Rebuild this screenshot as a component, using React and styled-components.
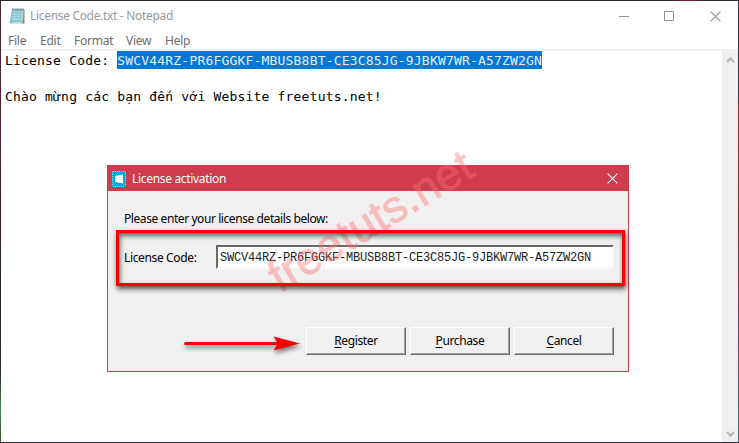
import React from "react";
import styled, { createGlobalStyle } from "styled-components";

const GlobalStyle = createGlobalStyle`
  * { box-sizing: border-box; }
  body { margin: 0; }
`;

const UI_FONT = `"Noto Sans", "Open Sans", sans-serif`;

const Desktop = styled.div`
  position: relative;
  width: 739px;
  height: 443px;
  padding: 1px;
  overflow: hidden;
  background:
    linear-gradient(#2c2a2f, #2c2a2f) 0 100% / 100% 1px no-repeat,
    linear-gradient(90deg, #2c2528 0 91%, #8a2340 93%, #2c2a2f 95%) 0 0 / 739px 1px no-repeat,
    linear-gradient(#3c2530 0, #51222f 30%, #2c1d24 60%, #27342a 85%, #4c8a4c 92%, #35512f) 0 0 / 1px 100% no-repeat,
    linear-gradient(#2f2f34 0, #35353a 22%, #8c2c40 24%, #6a2a38 50%, #52566a 90%, #5c6478) 100% 0 / 1px 100% no-repeat;
  font-family: ${UI_FONT};
`;

const NotepadWindow = styled.div`
  display: flex;
  flex-direction: column;
  height: 441px;
  background: #fff;
`;

const TitleBar = styled.header`
  display: flex;
  align-items: center;
  height: 30px;
  padding-left: 8px;
  color: #999;
  font-size: 12px;
`;

const Title = styled.span`
  flex: 1;
  margin-left: 4px;
  letter-spacing: -0.32px;
  line-height: 18px;
  white-space: nowrap;
`;

const WindowControls = styled.div`
  display: flex;
  height: 28px;
`;

const Control = styled.div`
  display: grid;
  place-items: center;
  width: ${(p) => p.$width || 46}px;
`;

const MenuBar = styled.nav`
  display: flex;
  gap: 14px;
  height: 18px;
  padding-left: 7px;
  color: #6d6d6d;
  font-size: 12px;
  line-height: 20px;
`;

const MenuItem = styled.span`
  width: ${(p) => p.$width}px;
  letter-spacing: -0.25px;
  white-space: nowrap;
`;

const Body = styled.div`
  display: flex;
  flex: 1;
  border-top: 2px solid #f0f0f0;
`;

const Editor = styled.div`
  flex: 1;
  padding-left: 4px;
  color: #000;
  font-family: "DejaVu Sans Mono", monospace;
  font-size: 13px;
  letter-spacing: 0.19px;
  line-height: 20px;
  white-space: pre;
`;

const Line = styled.div`
  height: 18px;
`;

const Selection = styled.span`
  display: inline-block;
  height: 18px;
  color: #e4f1ff;
  background: #0078d7;
`;

const Scrollbar = styled.div`
  display: flex;
  flex-direction: column;
  justify-content: space-between;
  align-items: center;
  width: 16px;
  padding: 5px 0 4px;
  background: #f0f0f0;
`;

const Dialog = styled.section`
  position: absolute;
  left: 107px;
  top: 165px;
  width: 522px;
  height: 207px;
  border: 1px solid #cd3d4c;
  background: #f0f0f0;
  color: #000;
  font-size: 12px;
`;

const DialogBar = styled.header`
  display: flex;
  align-items: center;
  height: 25px;
  padding: 0 10px 0 4px;
  color: #fff;
  background: #cd3d4c;
`;

const DialogTitle = styled.span`
  flex: 1;
  margin-left: 6px;
  font-size: 12px;
  letter-spacing: -0.32px;
  line-height: 18px;
`;

const DialogBody = styled.div`
  display: flex;
  flex-direction: column;
  padding: 19px 14px 0 16px;
`;

const Prompt = styled.p`
  margin: 0;
  letter-spacing: -0.42px;
  line-height: 18px;
`;

const Field = styled.div`
  display: flex;
  align-items: center;
  margin-top: 17px;
`;

const Label = styled.label`
  width: 92px;
  letter-spacing: -0.36px;
`;

const LicenseInput = styled.div`
  flex: 1;
  height: 24px;
  padding-left: 2px;
  border: 2px solid;
  border-color: #696969 #fafafa #fafafa #696969;
  background: #fff;
  color: #1c1c1c;
  font-family: "Liberation Mono", monospace;
  font-size: 12px;
  letter-spacing: -0.2px;
  line-height: 22px;
  white-space: nowrap;
`;

const Actions = styled.div`
  display: flex;
  justify-content: flex-end;
  gap: 4px;
  margin-top: 58px;
`;

const Button = styled.button`
  width: 100px;
  height: 28px;
  padding: 0;
  border: 1px solid;
  border-color: #fff #696969 #696969 #fff;
  box-shadow: inset -1px -1px #a0a0a0;
  background: #f0f0f0;
  color: #000;
  font: 12px/20px ${UI_FONT};
  letter-spacing: -0.38px;
`;

const AccessKey = styled.span`
  text-decoration: underline;
  text-underline-offset: 2px;
`;

const Highlight = styled.div`
  position: absolute;
  left: 116px;
  top: 230px;
  width: 509px;
  height: 56px;
  border: 3px solid #fe0000;
  box-shadow: 1px 3px 5px rgba(0, 0, 0, 0.65), inset 1px 3px 5px rgba(0, 0, 0, 0.6);
`;

const Arrow = styled.svg`
  position: absolute;
  left: 180px;
  top: 330px;
  filter: drop-shadow(1px 3px 2px rgba(0, 0, 0, 0.5));
`;

const Watermark = styled.div`
  position: absolute;
  left: 280px;
  top: 253px;
  color: #ff7070;
  opacity: 0.4;
  font-family: "Liberation Sans", sans-serif;
  font-size: 45px;
  line-height: 50px;
  letter-spacing: 0.4px;
  white-space: nowrap;
  -webkit-text-stroke: 1px #ff7070;
  transform: rotate(-31deg);
  transform-origin: 0 40px;
  pointer-events: none;
`;

const NotepadIcon = () => (
  <svg width="17" height="18" viewBox="0 0 17 18">
    <path d="M3 3h12.5v13.5H13z" fill="#9a8460" />
    <path d="M3.5 2.5H15L13.5 16H1z" fill="#8ec5d4" stroke="#6aa5b5" strokeWidth=".7" />
    <path d="M4 5h9M3.6 7.5h9M3.2 10h9M2.8 12.5h9" stroke="#b9e2eb" strokeWidth=".8" />
    <path d="M4 1v3M6 1v3M8 1v3M10 1v3M12 1v3M14 1v3" stroke="#71888e" strokeWidth=".8" />
    <path d="M14 4.5l-1.2 11H4" fill="none" stroke="#d9edf0" strokeWidth=".7" />
  </svg>
);

const AppIcon = () => (
  <svg width="14" height="16" viewBox="0 0 14 16">
    <path d="M0 0h14v16H0z" fill="#00a9dc" />
    <path d="M1 .5h12M1 15.5h12M.5 1v14M13.5 1v14" stroke="#8fdcf0" strokeDasharray="1 1" />
    <path d="M3 5l8-1.5v9L3 11z" fill="#fff" />
  </svg>
);

const Cross = ({ color, size = 11 }) => (
  <svg width={size} height={size} viewBox="0 0 11 11">
    <path d="M.6.6l9.8 9.8M10.4.6L.6 10.4" stroke={color} strokeWidth="1.1" />
  </svg>
);

const Chevron = ({ down }) => (
  <svg width="9" height="8" viewBox="0 0 9 8">
    <path d={down ? "M1 2l3.5 3.5L8 2" : "M1 6l3.5-3.5L8 6"} fill="none" stroke="#b9b9b9" strokeWidth="2.3" />
  </svg>
);

const CODE = "SWCV44RZ-PR6FGGKF-MBUSB8BT-CE3C85JG-9JBKW7WR-A57ZW2GN";
const MENUS = [
  ["File", 18],
  ["Edit", 20],
  ["Format", 38],
  ["View", 25],
  ["Help", 26],
];

export default function App() {
  return (
    <Desktop>
      <GlobalStyle />
      <NotepadWindow>
        <TitleBar>
          <NotepadIcon />
          <Title>License Code.txt - Notepad</Title>
          <WindowControls>
            <Control $width={44}>
              <svg width="10" height="1"><path d="M0 .5h10" stroke="#929292" /></svg>
            </Control>
            <Control>
              <svg width="10" height="10"><path d="M.5.5h9v9h-9z" fill="none" stroke="#929292" /></svg>
            </Control>
            <Control><Cross color="#929292" /></Control>
          </WindowControls>
        </TitleBar>
        <MenuBar>
          {MENUS.map(([name, width]) => (
            <MenuItem key={name} $width={width}>{name}</MenuItem>
          ))}
        </MenuBar>
        <Body>
          <Editor>
            <Line>License Code: <Selection>{CODE}</Selection></Line>
            <Line />
            <Line>Chào mừng các bạn đến với Website freetuts.net!</Line>
          </Editor>
          <Scrollbar>
            <Chevron />
            <Chevron down />
          </Scrollbar>
        </Body>
      </NotepadWindow>

      <Dialog>
        <DialogBar>
          <AppIcon />
          <DialogTitle>License activation</DialogTitle>
          <Cross color="#fff" />
        </DialogBar>
        <DialogBody>
          <Prompt>Please enter your license details below:</Prompt>
          <Field>
            <Label>License Code:</Label>
            <LicenseInput>{CODE}</LicenseInput>
          </Field>
          <Actions>
            <Button><AccessKey>R</AccessKey>egister</Button>
            <Button><AccessKey>P</AccessKey>urchase</Button>
            <Button><AccessKey>C</AccessKey>ancel</Button>
          </Actions>
        </DialogBody>
      </Dialog>

      <Watermark>freetuts.net</Watermark>
      <Highlight />
      <Arrow width="128" height="28" viewBox="0 0 128 28">
        <path d="M5.5 13.5H98" stroke="#fe0000" strokeWidth="3" strokeLinecap="round" />
        <path d="M93.5 6.5L120 13.5 93.5 20.5 98 13.5z" fill="#fe0000" />
      </Arrow>
    </Desktop>
  );
}
